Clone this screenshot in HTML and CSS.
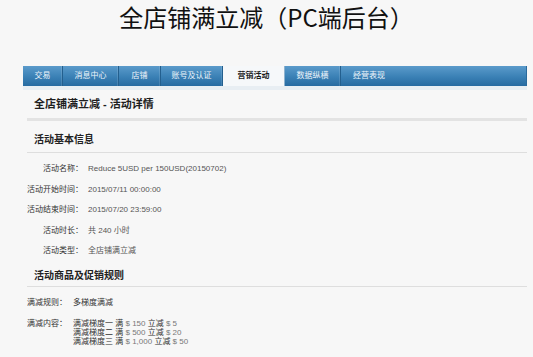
FILE: index.html
```html
<!DOCTYPE html>
<html lang="zh-CN">
<head>
<meta charset="utf-8">
<title>全店铺满立减（PC端后台）</title>
<link rel="stylesheet" href="styles.css">
</head>
<body>
<h1 class="title">全店铺满立减（PC端后台）</h1>
<div class="page">
  <nav class="nav">
    <span class="tab w40">交易</span>
    <span class="tab w56">消息中心</span>
    <span class="tab w42">店铺</span>
    <span class="tab w62">账号及认证</span>
    <span class="tab w62 active">营销活动</span>
    <span class="tab w56">数据纵横</span>
    <span class="tab w56">经营表现</span>
  </nav>
  <div class="nav-band"></div>
  <h2 class="heading">全店铺满立减 - 活动详情</h2>
  <div class="heading-rule"></div>

  <h3 class="section first">活动基本信息</h3>
  <div class="info">
    <span class="label">活动名称：</span><span class="value">Reduce 5USD per 150USD(20150702)</span>
    <span class="label">活动开始时间：</span><span class="value">2015/07/11 00:00:00</span>
    <span class="label">活动结束时间：</span><span class="value">2015/07/20 23:59:00</span>
    <span class="label">活动时长：</span><span class="value">共 240 小时</span>
    <span class="label">活动类型：</span><span class="value">全店铺满立减</span>
  </div>

  <h3 class="section second">活动商品及促销规则</h3>
  <div class="rules">
    <span class="rlabel">满减规则：</span><span class="rvalue">多梯度满减</span>
    <span class="rlabel multi">满减内容：</span>
    <div class="rvalue multi">
      <div>满减梯度一 满 <span class="num">$ 150</span> 立减 <span class="num">$ 5</span></div>
      <div>满减梯度二 满 <span class="num">$ 500</span> 立减 <span class="num">$ 20</span></div>
      <div>满减梯度三 满 <span class="num">$ 1,000</span> 立减 <span class="num">$ 50</span></div>
    </div>
  </div>
</div>
</body>
</html>
```

FILE: styles.css
```css
* { box-sizing: border-box; }
html, body { margin: 0; padding: 0; }
body {
  background: #f7f7f7;
  font-family: "Liberation Sans", "Noto Sans CJK SC", sans-serif;
  color: #333;
}
.title {
  margin: 0 0 32px;
  height: 34px;
  line-height: 34px;
  text-align: center;
  font-family: "Noto Sans CJK SC", sans-serif;
  font-weight: 400;
  font-size: 24px;
  color: #111;
  white-space: nowrap;
}
.page {
  margin-left: 23px;
  width: 504px;
}
.nav {
  display: flex;
  height: 20px;
  background: linear-gradient(#5b9bcb, #3a80b5 55%, #276ba1);
  border-right: 1px solid #2a6a9c;
}
.tab {
  flex: none;
  text-align: center;
  line-height: 20px;
  font-size: 8px;
  color: #eef5fb;
  border-right: 1px solid #235f8e;
  box-shadow: inset -1px 0 0 rgba(255,255,255,0.12);
  white-space: nowrap;
}
.w40 { width: 40px; }
.w42 { width: 42px; }
.w56 { width: 56px; }
.w62 { width: 62px; }
.tab:last-child { border-right: none; box-shadow: none; }
.tab.active {
  background: #f6f8fa;
  color: #1a1a1a;
  font-weight: 700;
  border-right-color: #8fb3cf;
  box-shadow: none;
}
.nav-band {
  height: 4px;
  background: #e8eef3;
}
.heading {
  margin: 0;
  height: 28px;
  line-height: 28px;
  padding-left: 11px;
  font-size: 11px;
  font-weight: 700;
  color: #1e1e1e;
}
.heading-rule {
  margin-left: 4px;
  height: 3px;
  background: #e3e3e3;
}
.section {
  margin: 0 0 0 4px;
  padding-left: 7px;
  font-size: 10px;
  font-weight: 700;
  line-height: 14px;
  color: #222;
  border-bottom: 1px solid #dedede;
}
.section.first { padding-top: 12px; padding-bottom: 5px; }
.section.second { padding-top: 7px; padding-bottom: 3.5px; }
.info {
  display: grid;
  grid-template-columns: 56px auto;
  column-gap: 5px;
  margin: 6px 0 0 4px;
  font-size: 8px;
  line-height: 20.5px;
}
.label {
  text-align: right;
  color: #333;
  white-space: nowrap;
}
.value { color: #555; }
.rules {
  display: grid;
  grid-template-columns: 40px auto;
  column-gap: 6px;
  margin: 6px 0 0 4px;
  font-size: 8px;
  line-height: 20px;
}
.rlabel { color: #333; white-space: nowrap; }
.rvalue { color: #333; }
.rlabel.multi, .rvalue.multi {
  margin-top: 5.5px;
  line-height: 9.2px;
}
.num { color: #777; }
```
